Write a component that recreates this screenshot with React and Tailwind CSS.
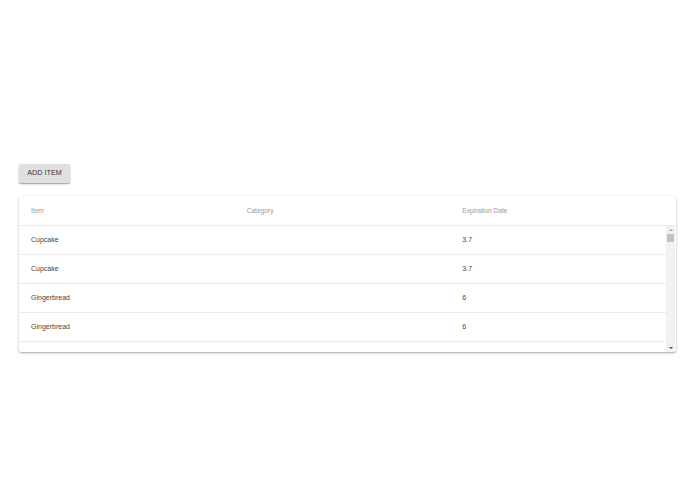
export default function App() {
  const rows = [
    ["Cupcake", "", "3.7"],
    ["Cupcake", "", "3.7"],
    ["Gingerbread", "", "6"],
    ["Gingerbread", "", "6"],
    ["", "", ""],
  ];
  return (
    <div className="w-[695px] h-[494px] bg-white pt-[164px] px-[19px]" style={{ fontFamily: "'Liberation Sans', Arial, sans-serif" }}>
      <button className="h-[19px] w-[51px] rounded-[2px] bg-[#e0e0e0] text-[7.2px] text-[#333] uppercase shadow-[0_1px_2px_rgba(0,0,0,0.3),0_1px_1px_rgba(0,0,0,0.14)] flex items-center justify-center">
        Add Item
      </button>
      <div className="mt-[13px] h-[156px] bg-white rounded-[2px] shadow-[0_1px_3px_rgba(0,0,0,0.25),0_1px_1px_rgba(0,0,0,0.12)] flex flex-col overflow-hidden">
        <div className="h-[30px] shrink-0 flex items-center border-b border-[#ebebeb] pr-[10px]">
          {["Item", "Category", "Expiration Date"].map((h) => (
            <div key={h} className="w-[216px] pl-[12px] text-[6.6px] text-[#9a9a9a]">{h}</div>
          ))}
        </div>
        <div className="flex flex-1 min-h-0">
          <div className="flex-1 overflow-hidden">
            {rows.map((r, i) => (
              <div key={i} className="h-[29px] flex items-center border-b border-[#ebebeb]">
                {r.map((c, j) => (
                  <div key={j} className="w-[216px] pl-[12px] text-[7px] text-[#444]">{c}</div>
                ))}
              </div>
            ))}
          </div>
          <div className="w-[9px] mr-[1px] bg-[#f1f1f1] flex flex-col items-center">
            <div className="h-[8px] flex items-center justify-center">
              <div className="w-0 h-0 border-l-[2px] border-r-[2px] border-b-[2px] border-l-transparent border-r-transparent border-b-[#a3a3a3]" />
            </div>
            <div className="w-[7px] h-[8px] bg-[#c1c1c1]" />
            <div className="flex-1" />
            <div className="h-[8px] flex items-center justify-center">
              <div className="w-0 h-0 border-l-[2px] border-r-[2px] border-t-[2px] border-l-transparent border-r-transparent border-t-[#505050]" />
            </div>
          </div>
        </div>
      </div>
    </div>
  );
}
